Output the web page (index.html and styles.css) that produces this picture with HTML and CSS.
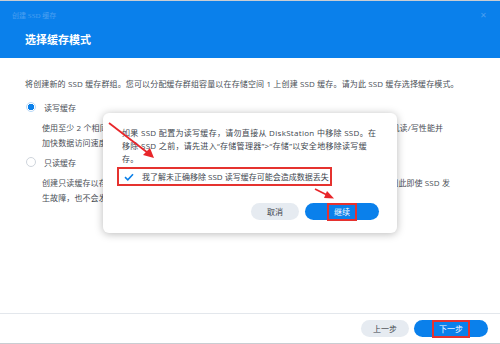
FILE: index.html
```html
<!DOCTYPE html>
<html lang="zh-CN">
  <head>
    <meta charset="UTF-8" />
    <meta name="viewport" content="width=device-width, initial-scale=1.0" />
    <title>创建 SSD 缓存</title>
    <link rel="stylesheet" href="styles.css">
  </head>
  <body>
    <div class="vindue">
      <header class="top">
        <div class="top-linje">
          <span class="lille-titel">创建 SSD 缓存</span>
          <span class="luk">&#x2715;</span>
        </div>
        <h1>选择缓存模式</h1>
      </header>

      <main class="indhold">
        <p class="intro">将创建新的 SSD 缓存群组。您可以分配缓存群组容量以在存储空间 1 上创建 SSD 缓存。请为此 SSD 缓存选择缓存模式。</p>

        <div class="valg">
          <span class="radio valgt"></span>
          <span>读写缓存</span>
        </div>
        <p class="beskrivelse">使用至少 2 个相同型号的 SSD 创建读写缓存，数据以 RAID 1 或更高级别受保护，同时可以提高随机读/写性能并<br>加快数据访问速度。</p>

        <div class="valg">
          <span class="radio"></span>
          <span>只读缓存</span>
        </div>
        <p class="beskrivelse">创建只读缓存以存储频繁访问的数据，提高随机读取性能。只读缓存不存储任何数据的唯一副本，因此即使 SSD 发<br>生故障，也不会发生数据丢失。</p>
      </main>

      <footer class="bund">
        <button class="knap graa">上一步</button>
        <button class="knap blaa"><span class="markering">下一步</span></button>
      </footer>

      <!-- pop up -->
      <section class="popop">
        <p>如果 SSD 配置为读写缓存，请勿直接从 DiskStation 中移除 SSD。在<br>移除 SSD 之前，请先进入“存储管理器”&gt;“存储”以安全地移除读写缓<br>存。</p>
        <label class="bekraeft">
          <svg class="flueben" width="10" height="8" viewBox="0 0 10 8">
            <path d="M1 4.2 L3.8 6.8 L9 1.2" fill="none" stroke="#0a7fe8" stroke-width="1.6" />
          </svg>
          <span>我了解未正确移除 SSD 读写缓存可能会造成数据丢失</span>
        </label>
        <div class="popop-knapper">
          <button class="knap graa">取消</button>
          <button class="knap blaa"><span class="markering">继续</span></button>
        </div>
      </section>

      <!-- pile -->
      <svg class="pile" width="500" height="344" viewBox="0 0 500 344">
        <line x1="109" y1="123" x2="148" y2="153" stroke="#e8262a" stroke-width="1.8" />
        <polygon points="154,158 143,155 150,148" fill="#e8262a" />
        <line x1="315" y1="189" x2="328" y2="195.5" stroke="#e8262a" stroke-width="1.6" />
        <polygon points="334,198.5 324,198 327,191" fill="#e8262a" />
      </svg>
    </div>
  </body>
</html>
```

FILE: styles.css
```css
      * {
        box-sizing: border-box;
      }

      body {
        margin: 0;
        font-family: "Open Sans", "Noto Sans CJK SC", sans-serif;
        font-size: 8px;
        color: #4a4f57;
      }

      .vindue {
        position: relative;
        width: 500px;
        height: 344px;
        overflow: hidden;
        border-top: 1px solid #c9cdd2;
        border-bottom: 1px solid #c9cdd2;
        display: flex;
        flex-direction: column;
        background-color: #fff;
      }

      .top {
        background-color: #0a80eb;
        height: 57px;
        padding: 7px 12px 0 12px;
      }

      .top-linje {
        display: flex;
        justify-content: space-between;
        align-items: center;
        height: 13px;
      }

      .lille-titel {
        font-size: 7px;
        color: #4b9ff0;
        font-family: "Liberation Serif", "Noto Sans CJK SC", serif;
      }

      .luk {
        font-size: 8px;
        color: #4b9ff0;
        margin-right: 1px;
      }

      .top h1 {
        margin: 11px 0 0 13px;
        font-size: 11px;
        line-height: 16px;
        font-weight: bold;
        color: #fff;
      }

      .indhold {
        flex: 1;
        padding: 19px 25px 0 25px;
      }

      .intro {
        margin: 0 0 9px 0;
        line-height: 14px;
        white-space: nowrap;
        letter-spacing: 0.14px;
      }

      .valg {
        display: flex;
        align-items: center;
        gap: 8px;
        height: 14px;
        margin-left: 1px;
      }

      .radio {
        width: 10px;
        height: 10px;
        border-radius: 50%;
        border: 1px solid #cfd5dc;
        background-color: #fff;
      }

      .radio.valgt {
        border: 1px solid #b9d9f8;
        background: radial-gradient(circle, #0a80eb 0 3px, #fff 3.5px);
      }

      .beskrivelse {
        margin: 6px 0 5px 17px;
        line-height: 15px;
        white-space: nowrap;
        letter-spacing: 0.1px;
      }

      .bund {
        height: 30px;
        border-top: 1px solid #e3e7ec;
        display: flex;
        justify-content: flex-end;
        align-items: center;
        gap: 5px;
        padding: 0 12px 0 0;
      }

      .knap {
        border: none;
        border-radius: 9px;
        height: 17px;
        font-family: "Open Sans", "Noto Sans CJK SC", sans-serif;
        font-size: 8px;
        padding: 0;
        display: flex;
        justify-content: center;
        align-items: center;
        cursor: pointer;
      }

      .graa {
        width: 48px;
        background-color: #e6ebf1;
        color: #3d434b;
      }

      .blaa {
        width: 74px;
        background-color: #0a80eb;
        color: #fff;
      }

      .markering {
        display: flex;
        justify-content: center;
        align-items: center;
        height: 18px;
        padding: 0 5px;
        border: 2px solid #e5322f;
      }

      .popop {
        position: absolute;
        left: 103px;
        top: 112px;
        width: 294px;
        height: 120px;
        background-color: #fff;
        border-radius: 6px;
        box-shadow: 0 1px 8px rgba(0, 0, 0, 0.28);
        padding: 13px 14px 0 14px;
      }

      .popop p {
        margin: 0 0 2px 5px;
        line-height: 13px;
        white-space: nowrap;
        color: #40464e;
        letter-spacing: 0.3px;
      }

      .bekraeft {
        display: flex;
        align-items: center;
        gap: 8px;
        width: 215px;
        height: 19px;
        padding-left: 5px;
        border: 2px solid #e5322f;
        color: #40464e;
      }

      .popop-knapper {
        display: flex;
        justify-content: flex-end;
        gap: 6px;
        margin-top: 17px;
        padding-right: 4px;
      }

      .pile {
        position: absolute;
        left: 0;
        top: -1px;
        pointer-events: none;
      }
```
